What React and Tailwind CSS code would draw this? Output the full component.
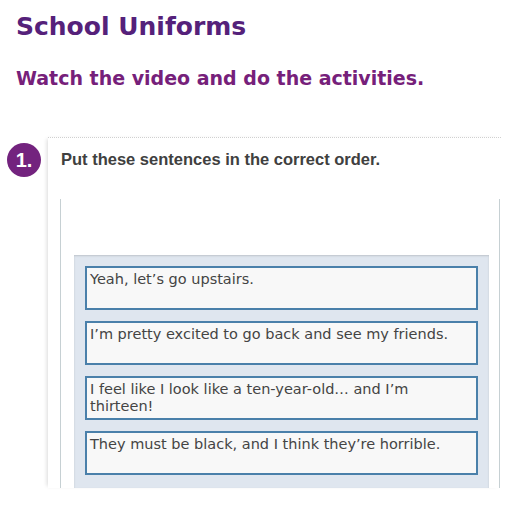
import React from 'react';

const sentences = [
  "Yeah, let’s go upstairs.",
  "I’m pretty excited to go back and see my friends.",
  "I feel like I look like a ten-year-old… and I’m thirteen!",
  "They must be black, and I think they’re horrible.",
];

const SentenceBox = ({ text }) => (
  <div className="h-[44px] border-2 border-[#4a80aa] bg-[#f8f8f8] pl-[3px] pr-[16px] pt-[3px] text-[14.5px] leading-[17px] text-[#444]">
    {text}
  </div>
);

export default function App() {
  return (
    <div className="w-[515px] h-[511px] overflow-hidden bg-white font-['DejaVu_Sans',sans-serif]">
      <h1 className="pl-4 pt-[11px] text-[25px] leading-[32px] font-bold text-[#55217a]">School Uniforms</h1>
      <h2 className="pl-4 mt-[24px] text-[19px] leading-[22px] font-bold text-[#76207a]">
        Watch the video and do the activities.
      </h2>

      <div className="mt-[48px] flex">
        <div className="w-[48px] shrink-0 pt-[6px] pl-[7px]">
          <div className="w-[34px] h-[34px] rounded-full bg-[#73237e] flex items-center justify-center text-white font-bold text-[20px] font-['Liberation_Sans',sans-serif]">
            1.
          </div>
        </div>
        <div className="w-[453px] h-[351px] border-t border-dotted border-[#d0d0d0] shadow-[-3px_0_4px_-2px_rgba(0,0,0,0.15)]">
          <p className="pl-[13px] pt-[12px] text-[16.5px] leading-[19px] font-bold text-[#404040] font-['Liberation_Sans',sans-serif]">
            Put these sentences in the correct order.
          </p>
          <div className="mt-[30px] ml-[12px] mr-[1px] h-[289px] border-x border-[#c6d0d3] pt-[56px] pl-[13px] pr-[10px]">
            <div className="h-[233px] bg-[#dfe6ef] px-[11px] pt-[11px] flex flex-col gap-[11px] shadow-[inset_0_1px_2px_rgba(0,0,0,0.15)]">
              {sentences.map((s) => (
                <SentenceBox key={s} text={s} />
              ))}
            </div>
          </div>
        </div>
      </div>
    </div>
  );
}
